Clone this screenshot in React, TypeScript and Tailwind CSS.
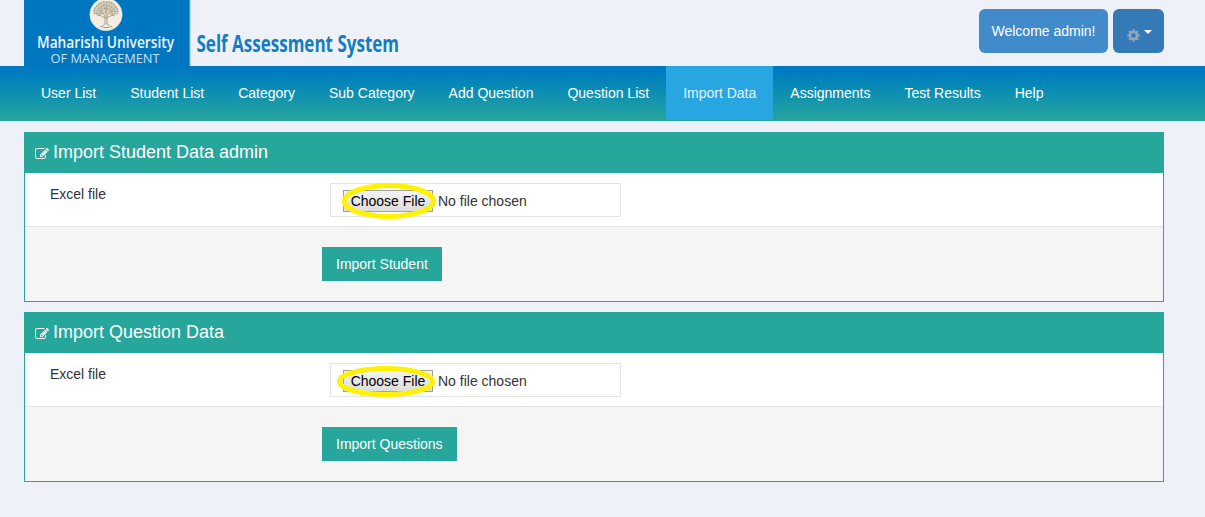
import React from "react";

const navItems = [
  "User List",
  "Student List",
  "Category",
  "Sub Category",
  "Add Question",
  "Question List",
  "Import Data",
  "Assignments",
  "Test Results",
  "Help",
];

function EditIcon() {
  return (
    <svg viewBox="0 0 1792 1792" fill="currentColor" className="mr-[4px] mt-[2px] h-[14px] w-[14px] shrink-0">
      <path d="M888 1184l116-116-152-152-116 116v56h96v96h56zm440-720q-16-16-33 1l-350 350q-17 17-1 33t33-1l350-350q17-17 1-33zm80 594v190q0 119-84.5 203.5t-203.5 84.5h-832q-119 0-203.5-84.5t-84.5-203.5v-832q0-119 84.5-203.5t203.5-84.5h832q63 0 117 25 15 7 18 23 3 17-9 29l-49 49q-14 14-32 8-23-6-45-6h-832q-66 0-113 47t-47 113v832q0 66 47 113t113 47h832q66 0 113-47t47-113v-126q0-13 9-22l64-64q15-15 35-7t20 29zm-96-738l288 288-672 672h-288v-288zm444 132l-92 92-288-288 92-92q28-28 68-28t68 28l152 152q28 28 28 68t-28 68z" />
    </svg>
  );
}

function GearIcon() {
  return (
    <svg viewBox="-6.5 -6.5 13 13" className="mt-[8px] h-[13px] w-[13px] shrink-0" stroke="#8fa6b8" fill="none">
      <circle r="3.5" strokeWidth="2.6" />
      <path strokeWidth="2.4" d="M0 -6.2V-4 M0 4V6.2 M-6.2 0H-4 M4 0H6.2 M-4.4 -4.4L-3 -3 M3 3L4.4 4.4 M-4.4 4.4L-3 3 M3 -3L4.4 -4.4" />
    </svg>
  );
}

function Logo() {
  return (
    <svg width="500" height="66" viewBox="0 0 500 66" className="block">
      <rect x="0" y="0" width="166" height="66" fill="#0076c0" />
      <rect x="165.5" y="0" width="1" height="66" fill="#8fc3e4" />
      <circle cx="82" cy="14.5" r="16.2" fill="#f4eee2" stroke="#c4dcea" strokeWidth="0.6" />
      <path d="M70 13 Q69 8 73 6 Q76 1 82 2 Q88 1 91 6 Q95 8 94 13 Q92 17 87 15 Q84 13 82 14 Q80 13 77 15 Q72 17 70 13Z" fill="#d5ccb9" />
      <g fill="none" stroke="#a79c88" strokeWidth="1.5" strokeDasharray="1.5 1.2">
        <path d="M70.5 14 Q69 9 73 6 Q77 1 82 2 Q88 1 91 6 Q95 9 93.5 14" />
        <path d="M73 14 Q74 6 82 5 Q90 6 91 14" />
        <path d="M76 14.5 Q75 9 82 8 Q89 9 88 14.5" />
      </g>
      <g fill="none" stroke="#a3967f" strokeWidth="0.9" strokeLinecap="round">
        <path d="M81 24 V16 L77 11 M83 24 V16 L87 11 M82 18 V7" />
        <path d="M81 18 Q77 15 74 15 M83 18 Q87 15 90 15" />
        <path d="M76 27 Q80 26 81 24 M88 27 Q84 26 83 24 M79 27.5 H85" />
      </g>
      <text x="13" y="48" fontSize="15.5" fontWeight="600" fill="#eaf5fb" fontFamily="'Open Sans', 'Noto Sans', sans-serif" textLength="137" lengthAdjust="spacingAndGlyphs">
        Maharishi University
      </text>
      <text x="26.5" y="62.5" fontSize="12" fill="#c3e1f2" fontFamily="'Open Sans', 'Noto Sans', sans-serif" textLength="109" lengthAdjust="spacingAndGlyphs">
        OF MANAGEMENT
      </text>
      <text x="172.5" y="51.5" fontSize="22.5" fontWeight="700" fill="#137dc2" fontFamily="'Open Sans', 'Noto Sans', sans-serif" textLength="202.5" lengthAdjust="spacingAndGlyphs">
        Self Assessment System
      </text>
    </svg>
  );
}

type PanelProps = {
  title: string;
  action: string;
  ring: { cx: number; cy: number; rx: number; ry: number };
};

function ImportPanel({ title, action, ring }: PanelProps) {
  return (
    <section className="h-[170px] border border-[#27a69b] bg-white">
      <h2 className="flex h-10 items-center bg-[#27a69b] pl-[10px] text-[18px] leading-5 text-white">
        <EditIcon />
        <span className="relative -top-px">{title}</span>
      </h2>
      <div className="flex h-[54px] border-b border-[#e5e5e5]">
        <div className="w-[305px] shrink-0 pl-[25px] pt-[11px] leading-5">Excel file</div>
        <div className="relative mt-[10px] flex h-[34px] w-[291px] items-center border border-[#e5e5e5] pl-3 pt-[2px]">
          <button className="flex h-[22px] w-[90px] items-center justify-center whitespace-nowrap border border-[#a0a0a0] bg-linear-to-b from-[#f3f3f3] to-[#dddddd] text-black">
            Choose File
          </button>
          <span className="ml-[5px]">No file chosen</span>
          <svg className="pointer-events-none absolute -left-px -top-px overflow-visible" width="120" height="34">
            <ellipse cx={ring.cx} cy={ring.cy} rx={ring.rx} ry={ring.ry} fill="none" stroke="#fff200" strokeWidth="5" />
          </svg>
        </div>
      </div>
      <div className="flex h-[74px] items-start bg-[#f5f5f5] pl-[297px] pt-5">
        <button className="h-[34px] bg-[#27a69b] px-[14px] text-white">{action}</button>
      </div>
    </section>
  );
}

export default function App() {
  return (
    <div className="h-[517px] overflow-hidden bg-[#eef1f7] font-['Liberation_Sans',Arial,sans-serif] text-[14px] leading-5 text-[#333333]">
      <header className="flex h-[66px] justify-between pl-6 pr-[41px]">
        <Logo />
        <div className="flex gap-[5px] pt-[9px]">
          <button className="h-11 w-[129px] rounded-md bg-[#428bca] text-white">Welcome admin!</button>
          <button className="flex h-11 w-[51px] items-center rounded-md bg-[#337ab7] pl-[14px]">
            <GearIcon />
            <span className="ml-[4px] mt-[2px] border-x-4 border-t-4 border-x-transparent border-t-white" />
          </button>
        </div>
      </header>
      <nav className="flex h-[55px] bg-linear-to-b from-[#0076c3] to-[#27a69b] pl-6">
        {navItems.map((item) => (
          <a
            key={item}
            className={
              item === "Import Data"
                ? "flex h-[54px] items-center whitespace-nowrap bg-[#27a6e1] px-[17px] text-[#e6f3fa]"
                : "flex h-[54px] items-center whitespace-nowrap px-[17px] text-white"
            }
          >
            {item}
          </a>
        ))}
      </nav>
      <main className="flex flex-col gap-[10px] pl-6 pr-[41px] pt-[11px]">
        <ImportPanel title="Import Student Data admin" action="Import Student" ring={{ cx: 59, cy: 18, rx: 44.5, ry: 15.5 }} />
        <ImportPanel title="Import Question Data" action="Import Questions" ring={{ cx: 56, cy: 18.5, rx: 46.5, ry: 13 }} />
      </main>
    </div>
  );
}
